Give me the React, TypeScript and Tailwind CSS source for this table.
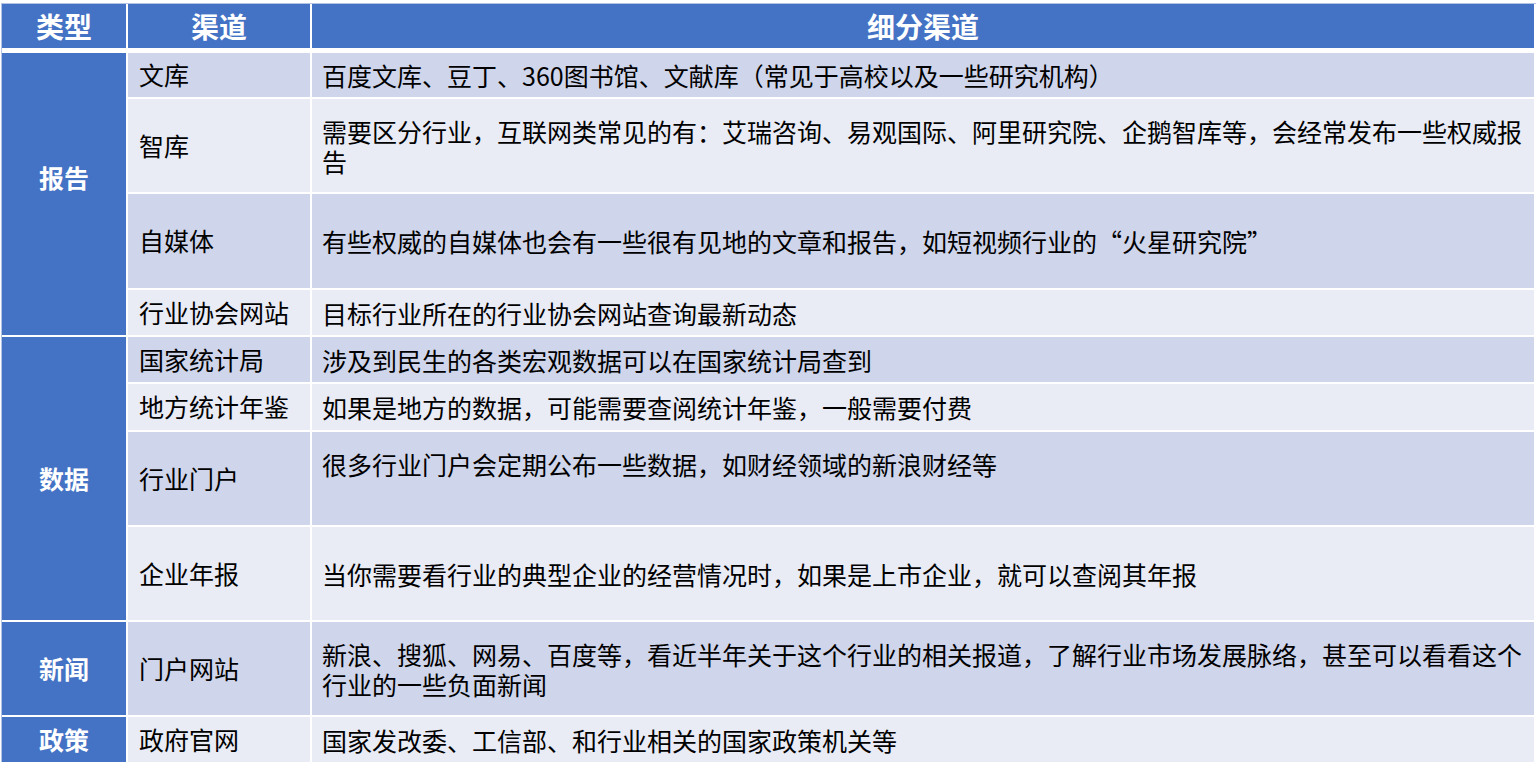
const FONT = '"Noto Sans CJK SC", "Noto Sans", sans-serif'

interface Row {
  channel: string
  detail: string[]
  h: string
}

interface Group {
  type: string
  pad?: string
  rows: Row[]
}

const groups: Group[] = [
  {
    type: '报告',
    pad: 'pb-[32px]',
    rows: [
      { channel: '文库', detail: ['百度文库、豆丁、360图书馆、文献库（常见于高校以及一些研究机构）'], h: 'h-[44px]' },
      {
        channel: '智库',
        detail: ['需要区分行业，互联网类常见的有：艾瑞咨询、易观国际、阿里研究院、企鹅智库等，会经常发布一些权威报', '告'],
        h: 'h-[93px]',
      },
      { channel: '自媒体', detail: ['有些权威的自媒体也会有一些很有见地的文章和报告，如短视频行业的“火星研究院”'], h: 'h-[94px]' },
      { channel: '行业协会网站', detail: ['目标行业所在的行业协会网站查询最新动态'], h: 'h-[45px]' },
    ],
  },
  {
    type: '数据',
    rows: [
      { channel: '国家统计局', detail: ['涉及到民生的各类宏观数据可以在国家统计局查到'], h: 'h-[45px]' },
      { channel: '地方统计年鉴', detail: ['如果是地方的数据，可能需要查阅统计年鉴，一般需要付费'], h: 'h-[46px]' },
      { channel: '行业门户', detail: ['很多行业门户会定期公布一些数据，如财经领域的新浪财经等', '\u00a0'], h: 'h-[93px]' },
      { channel: '企业年报', detail: ['当你需要看行业的典型企业的经营情况时，如果是上市企业，就可以查阅其年报'], h: 'h-[93px]' },
    ],
  },
  {
    type: '新闻',
    rows: [
      {
        channel: '门户网站',
        detail: ['新浪、搜狐、网易、百度等，看近半年关于这个行业的相关报道，了解行业市场发展脉络，甚至可以看看这个', '行业的一些负面新闻'],
        h: 'h-[93px]',
      },
    ],
  },
  {
    type: '政策',
    rows: [{ channel: '政府官网', detail: ['国家发改委、工信部、和行业相关的国家政策机关等'], h: 'h-[45px]' }],
  },
]

export default function App() {
  let idx = 0

  return (
    <div className="w-[1540px] h-[771px] bg-white" style={{ fontFamily: FONT }}>
      <div className="ml-[1px] mt-[3px] w-[1535px] border-t border-l border-[#b4c3e3] bg-white">
        {/* header */}
        <div className="flex gap-[2px] h-[44px]">
          <div className="w-[124px] bg-[#4472c4] flex items-center justify-center text-white font-bold text-[28px]">类型</div>
          <div className="w-[182px] bg-[#4472c4] flex items-center justify-center text-white font-bold text-[28px]">渠道</div>
          <div className="w-[1222px] bg-[#4472c4] flex items-center justify-center text-white font-bold text-[28px]">细分渠道</div>
        </div>

        <div className="mt-[5px] flex flex-col gap-[2px]">
          {groups.map((g) => (
            <div key={g.type} className="flex gap-[2px]">
              <div
                className={`w-[124px] shrink-0 bg-[#4472c4] flex items-center justify-center text-white font-bold text-[25px] ${g.pad ?? ''}`}
              >
                {g.type}
              </div>
              <div className="flex flex-col gap-[2px]">
                {g.rows.map((r) => {
                  const dark = idx++ % 2 === 0
                  const bg = dark ? 'bg-[#cfd5ea]' : 'bg-[#e9ebf5]'
                  return (
                    <div key={r.channel} className={`flex gap-[2px] ${r.h}`}>
                      <div className={`w-[182px] ${bg} flex items-center pl-[11px] text-[25px] text-black whitespace-nowrap`}>
                        {r.channel}
                      </div>
                      <div className={`w-[1222px] ${bg} flex flex-col justify-center pl-[10px] text-[25px] leading-[30px] text-black whitespace-nowrap`}>
                        {r.detail.map((line, i) => (
                          <div key={i}>{line}</div>
                        ))}
                      </div>
                    </div>
                  )
                })}
              </div>
            </div>
          ))}
        </div>
      </div>
    </div>
  )
}
